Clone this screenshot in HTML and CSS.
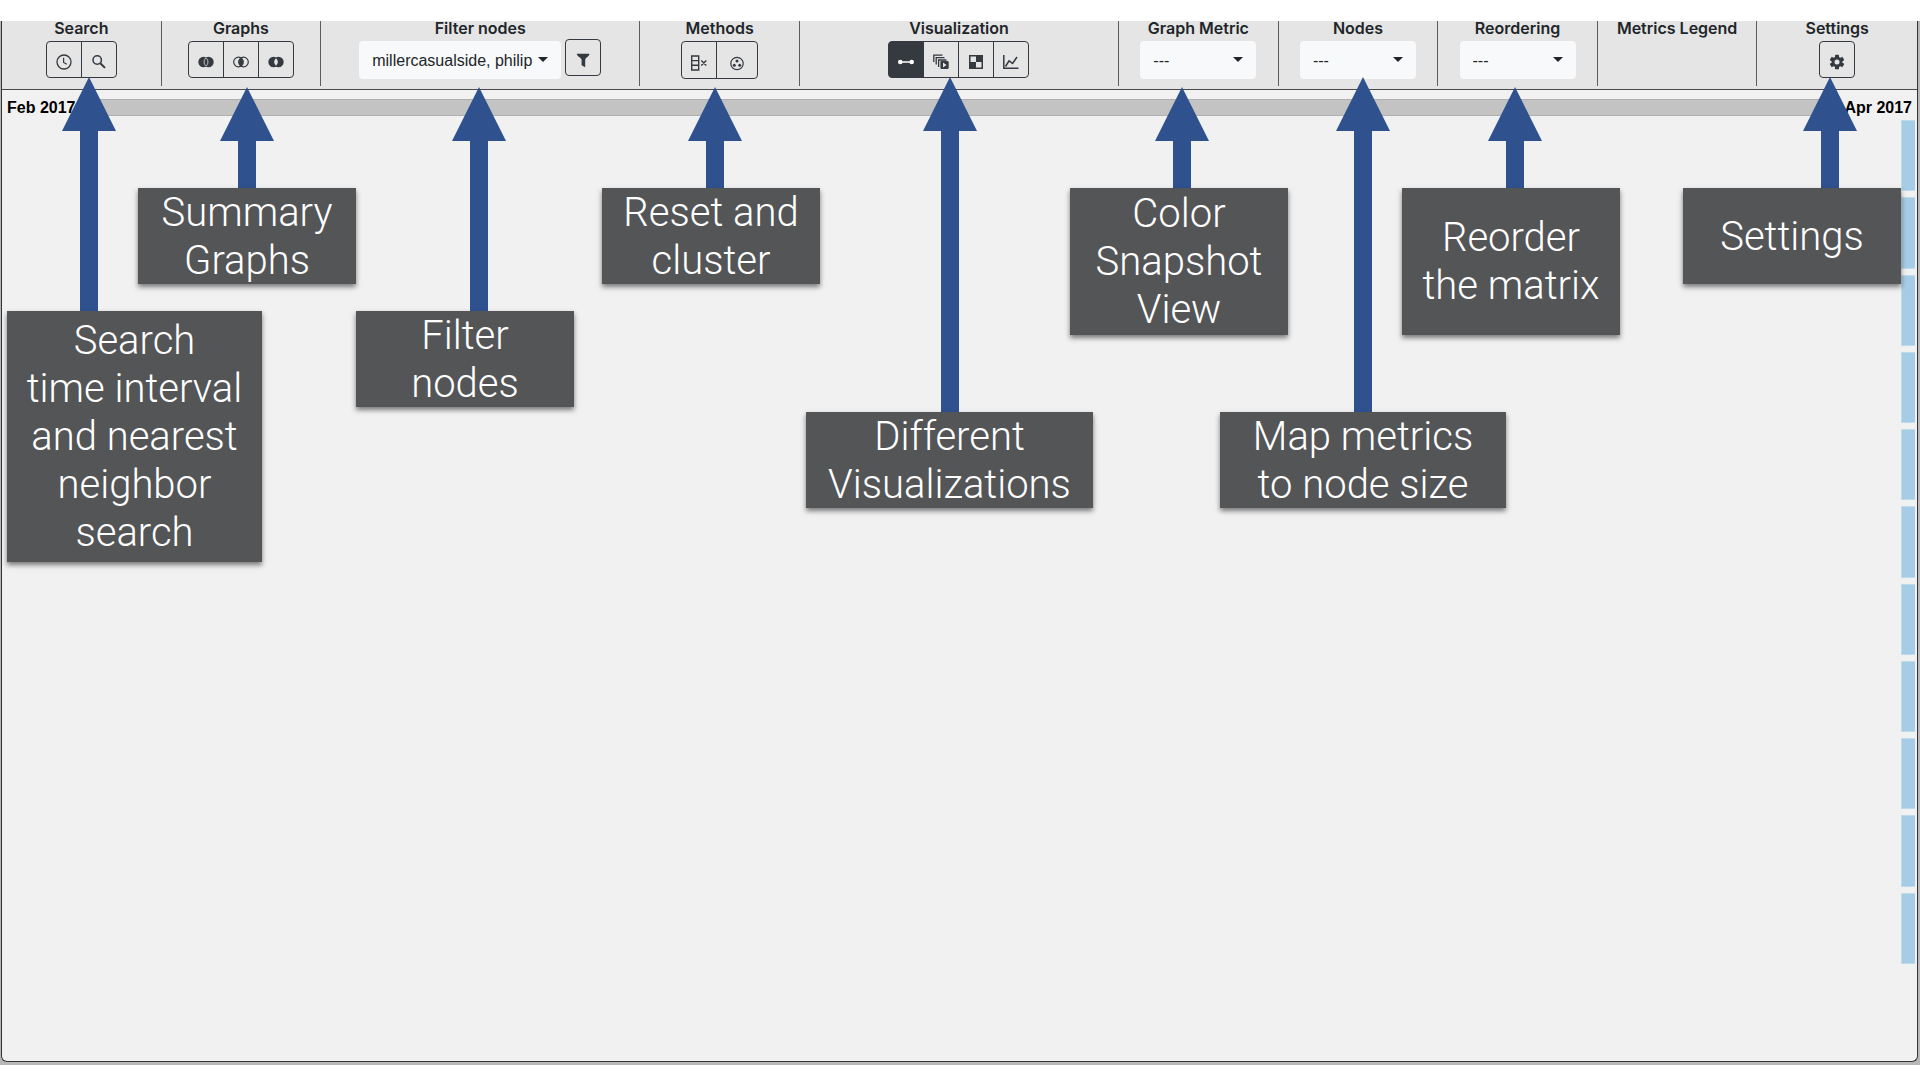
FILE: index.html
```html
<!DOCTYPE html>
<html lang="en">
<head>
<meta charset="utf-8">
<meta name="viewport" content="width=device-width, initial-scale=1">
<title>Dynamic graph overview</title>
<link rel="stylesheet" href="styles.css">
</head>
<body>
<div class="frame">
<main class="window">
  <header class="toolbar">
    <section class="cell">
      <h2 class="title">Search</h2>
      <div class="group">
        <button class="btn" type="button" aria-label="Search time interval"><svg class="icon" viewBox="0 0 16 16"><circle cx="8" cy="8" r="7" fill="none" stroke="currentColor" stroke-width="1.3"/><path d="M7.6 3.8v4.6l3.2 1.9" fill="none" stroke="currentColor" stroke-width="1.2"/></svg></button>
        <button class="btn" type="button" aria-label="Nearest neighbor search"><svg class="icon" viewBox="0 0 16 16"><circle cx="6.2" cy="6" r="4.2" fill="none" stroke="currentColor" stroke-width="1.5"/><path d="M9.3 9.2l4.7 4.7" fill="none" stroke="currentColor" stroke-width="2"/></svg></button>
      </div>
    </section>
    <section class="cell">
      <h2 class="title">Graphs</h2>
      <div class="group">
        <button class="btn" type="button" aria-label="Union"><svg class="icon" viewBox="0 0 16 16"><circle cx="5.5" cy="8" r="5.2" fill="currentColor"/><circle cx="10.5" cy="8" r="5.2" fill="currentColor"/><path d="M8 3.8c-2.6 2.6-2.6 5.8 0 8.4c2.6-2.6 2.6-5.8 0-8.4z" fill="none" stroke="#c9cbcd" stroke-width=".9"/></svg></button>
        <button class="btn" type="button" aria-label="Intersection"><svg class="icon" viewBox="0 0 16 16"><g fill="none" stroke="currentColor" stroke-width="1.2"><circle cx="5.5" cy="8" r="4.8"/><circle cx="10.5" cy="8" r="4.8"/></g><path d="M8 3.9c-2.9 2.3-2.9 5.9 0 8.2c2.9-2.3 2.9-5.9 0-8.2z" fill="currentColor"/></svg></button>
        <button class="btn" type="button" aria-label="Difference"><svg class="icon" viewBox="0 0 16 16"><circle cx="5.5" cy="8" r="5.2" fill="currentColor"/><circle cx="10.5" cy="8" r="5.2" fill="currentColor"/><path d="M8 4.3c-2.5 2.4-2.5 5 0 7.4c2.5-2.4 2.5-5 0-7.4z" fill="#e5e5e5"/></svg></button>
      </div>
    </section>
    <section class="cell wide">
      <h2 class="title" id="t-filter">Filter nodes</h2>
      <div class="filter">
        <span class="picker names"><select aria-labelledby="t-filter"><option>millercasualside, philip</option></select></span>
        <button class="btn single" type="button" aria-label="Apply filter"><svg class="icon" viewBox="0 0 16 16"><path d="M1.8 1.8h12.6c0 3-3.9 3.6-4.2 6v7.4l-3.6-2v-5.4c-.4-2.4-4.8-3-4.8-6z" fill="currentColor"/></svg></button>
      </div>
    </section>
    <section class="cell">
      <h2 class="title">Methods</h2>
      <div class="group methods">
        <button class="btn" type="button" aria-label="Reset"><svg class="icon" viewBox="0 0 16 16"><path d="M.7 1h7v14h-7zM.7 5.6h7M.7 10.3h7M10.3 5.5l5 5M15.3 5.5l-5 5" fill="none" stroke="currentColor" stroke-width="1.4"/></svg></button>
        <button class="btn" type="button" aria-label="Cluster"><svg class="icon" viewBox="0 0 16 16"><circle cx="8" cy="8.5" r="6.2" fill="none" stroke="currentColor" stroke-width="1.2"/><g fill="currentColor"><circle cx="8" cy="6" r="1.5"/><circle cx="5.3" cy="10.2" r="1.5"/><circle cx="10.7" cy="10.2" r="1.5"/></g></svg></button>
      </div>
    </section>
    <section class="cell wide">
      <h2 class="title">Visualization</h2>
      <div class="group">
        <button class="btn active" type="button" aria-label="Node link"><svg class="icon" viewBox="0 0 16 16"><circle cx="2.3" cy="8" r="2.3" fill="currentColor"/><circle cx="13.7" cy="8" r="2.3" fill="currentColor"/><path d="M2 8h12" stroke="currentColor" stroke-width="1.5"/></svg></button>
        <button class="btn" type="button" aria-label="Animation"><svg class="icon" viewBox="0 0 16 16"><path d="M.8 8V1.2H9.5M3.2 10.5V3.6H11.5M5.6 13V6H13.5" fill="none" stroke="currentColor" stroke-width="1.3"/><path fill-rule="evenodd" d="M8.4 7h6q1.3 0 1.3 1.3v5.4q0 1.3-1.3 1.3H8.7q-1.3 0-1.3-1.3V8q0-1 1-1zM10 8.6v5l3.6-2.5z" fill="currentColor"/></svg></button>
        <button class="btn" type="button" aria-label="Matrix"><svg class="icon" viewBox="0 0 16 16"><path fill-rule="evenodd" d="M1 1h14v14H1zM2.5 2.5V8H8V2.5zM8 8v5.5h5.5V8z" fill="currentColor"/></svg></button>
        <button class="btn" type="button" aria-label="Line chart"><svg class="icon" viewBox="0 0 16 16"><path d="M.8 1v13.3H15.5M2.5 12.5L6 6.8l3.6 2.6L14 3" fill="none" stroke="currentColor" stroke-width="1.5"/></svg></button>
      </div>
    </section>
    <section class="cell">
      <h2 class="title" id="t-metric">Graph Metric</h2>
      <span class="picker"><select aria-labelledby="t-metric"><option>---</option></select></span>
    </section>
    <section class="cell">
      <h2 class="title" id="t-nodes">Nodes</h2>
      <span class="picker"><select aria-labelledby="t-nodes"><option>---</option></select></span>
    </section>
    <section class="cell">
      <h2 class="title" id="t-order">Reordering</h2>
      <span class="picker"><select aria-labelledby="t-order"><option>---</option></select></span>
    </section>
    <section class="cell">
      <h2 class="title">Metrics Legend</h2>
    </section>
    <section class="cell">
      <h2 class="title">Settings</h2>
      <div class="group">
        <button class="btn single" type="button" aria-label="Settings"><svg class="icon" viewBox="0 0 16 16"><g fill="currentColor"><rect x="6" y=".7" width="4" height="14.6" rx=".6"/><rect x="6" y=".7" width="4" height="14.6" rx=".6" transform="rotate(60 8 8)"/><rect x="6" y=".7" width="4" height="14.6" rx=".6" transform="rotate(120 8 8)"/><circle cx="8" cy="8" r="5.4"/></g><circle cx="8" cy="8" r="2.5" fill="#e5e5e5"/></svg></button>
      </div>
    </section>
  </header>

  <div class="timeline">
    <span>Feb 2017</span>
    <div class="track"></div>
    <span>Apr 2017</span>
  </div>

  <div class="canvas">
    <div class="snapshots">
      <i></i><i></i><i></i><i></i><i></i><i></i><i></i><i></i><i></i><i></i><i></i>
    </div>
  </div>
</main>
</div>

<div class="arrow a-search"></div>
<div class="arrow a-graphs"></div>
<div class="arrow a-filter"></div>
<div class="arrow a-methods"></div>
<div class="arrow a-vis"></div>
<div class="arrow a-metric"></div>
<div class="arrow a-nodes"></div>
<div class="arrow a-order"></div>
<div class="arrow a-settings"></div>

<p class="note n-search">Search<br>time interval<br>and nearest<br>neighbor<br>search</p>
<p class="note n-graphs">Summary<br>Graphs</p>
<p class="note n-filter">Filter<br>nodes</p>
<p class="note n-methods">Reset and<br>cluster</p>
<p class="note n-vis">Different<br>Visualizations</p>
<p class="note n-metric">Color<br>Snapshot<br>View</p>
<p class="note n-nodes">Map metrics<br>to node size</p>
<p class="note n-order">Reorder<br>the matrix</p>
<p class="note n-settings">Settings</p>
</body>
</html>
```
FILE: styles.css
```css
* { box-sizing: border-box; }

body {
  margin: 0;
  min-height: 100vh;
  padding: 21px 0 15px;
  display: flex;
  flex-direction: column;
  position: relative;
  background: #fff;
  color: #212529;
  font-family: Inter, "Liberation Sans", sans-serif;
}

.frame {
  flex: 1;
  display: flex;
  flex-direction: column;
  padding: 0 2px 3px 1px;
  background: #b8b8b8;
}

.window {
  flex: 1;
  display: flex;
  flex-direction: column;
  border: 1px solid #333;
  border-top: 0;
  border-radius: 0 0 6px 6px;
  background: #f1f1f1;
}

/* Toolbar */
.toolbar {
  display: grid;
  grid-template-columns: repeat(12, 1fr);
  padding-bottom: 3px;
  background: #e5e5e5;
  border-bottom: 1px solid #4a4a4c;
}
.cell {
  height: 65px;
  min-width: 0;
  display: flex;
  flex-direction: column;
  align-items: center;
  border-right: 1px solid #5c5c5e;
}
.cell:last-child { border-right: 0; }
.wide { grid-column: span 2; }
.title {
  margin: 0 0 3px;
  font-size: 16px;
  line-height: 15px;
  font-weight: 600;
  white-space: nowrap;
}
.group { display: flex; margin-top: 2px; }
.btn {
  width: 36px;
  height: 37px;
  padding: 4px 0 0;
  display: flex;
  align-items: center;
  justify-content: center;
  border: 1px solid #343a40;
  background: transparent;
  color: #343a40;
}
.btn + .btn { margin-left: -1px; }
.btn:first-child { border-radius: 4px 0 0 4px; }
.btn:last-child { border-radius: 0 4px 4px 0; }
.btn.single { border-radius: 4px; }
.btn.active { background: #343a40; color: #fff; }
.methods .btn { height: 38px; padding-top: 6px; }
.methods .btn:last-child { width: 42px; }
.icon { width: 16px; height: 16px; display: block; }

.filter { display: flex; align-items: flex-start; gap: 4px; }
.picker {
  position: relative;
  width: 116px;
  height: 38px;
  margin-top: 2px;
}
.picker.names { width: 202px; }
.picker select {
  width: 100%;
  height: 100%;
  padding: 0 13px;
  appearance: none;
  border: 0;
  border-radius: 4px;
  background: #f8f9fa;
  color: #212529;
  font: 16px "Liberation Sans", Arial, sans-serif;
}
.picker::after {
  content: "";
  position: absolute;
  top: 16px;
  right: 13px;
  border: 5px solid transparent;
  border-top-color: #212529;
  border-bottom: 0;
}

/* Timeline */
.timeline {
  display: flex;
  align-items: center;
  gap: 6px;
  padding: 9px 5px 4px;
  color: #000;
  font: bold 16px/17px "Liberation Sans", Arial, sans-serif;
}
.track {
  flex: 1;
  height: 17px;
  background: #c3c3c3;
  border: solid #b0b0b0;
  border-width: 1px 0;
}

/* Snapshot strip */
.canvas { flex: 1; display: flex; justify-content: flex-end; padding: 0 2px 97px 0; }
.snapshots { width: 14px; display: flex; flex-direction: column; gap: 6px; }
.snapshots i { flex: 1; background: #a6cce6; border: solid #bfdaea; border-width: 1px 0 1px 1px; }

/* Callouts lying over the window */
.arrow {
  position: absolute;
  width: 54px;
  background: #2f528f;
  clip-path: polygon(50% 0, 100% 54px, 36px 54px, 36px 100%, 18px 100%, 18px 54px, 0 54px);
}
.a-search { left: 62px; top: 77px; height: 234px; }
.a-graphs { left: 220px; top: 87px; height: 101px; }
.a-filter { left: 452px; top: 87px; height: 224px; }
.a-methods { left: 688px; top: 87px; height: 101px; }
.a-vis { left: 923px; top: 77px; height: 335px; }
.a-metric { left: 1155px; top: 87px; height: 101px; }
.a-nodes { left: 1336px; top: 77px; height: 335px; }
.a-order { left: 1488px; top: 87px; height: 101px; }
.a-settings { left: 1803px; top: 77px; height: 111px; }

.note {
  position: absolute;
  margin: 0;
  padding-top: 1px;
  width: 218px;
  height: 96px;
  display: grid;
  place-content: center;
  text-align: center;
  white-space: nowrap;
  background: #545557;
  color: #fff;
  font: 350 40px/48px Roboto, sans-serif;
  box-shadow: 0 3px 5px rgba(0, 0, 0, .5);
}
.n-search { left: 7px; top: 311px; width: 255px; height: 251px; }
.n-graphs { left: 138px; top: 188px; }
.n-filter { left: 356px; top: 311px; }
.n-methods { left: 602px; top: 188px; }
.n-vis { left: 806px; top: 412px; width: 287px; }
.n-metric { left: 1070px; top: 188px; height: 147px; }
.n-nodes { left: 1220px; top: 412px; width: 286px; }
.n-order { left: 1402px; top: 188px; height: 147px; }
.n-settings { left: 1683px; top: 188px; }
```
